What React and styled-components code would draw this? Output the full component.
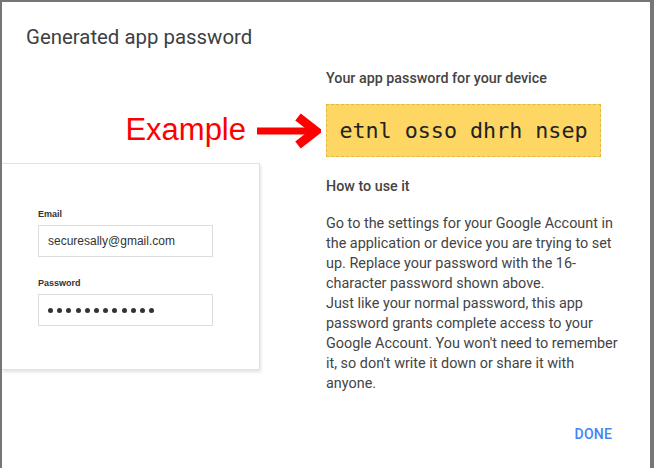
import React from "react";
import styled, { createGlobalStyle } from "styled-components";

const Global = createGlobalStyle`
  html, body { margin: 0; padding: 0; }
  body {
    background: #767676;
    font-family: Roboto, "Noto Sans", Arial, sans-serif;
    overflow: hidden;
  }
`;

const Backdrop = styled.div`
  width: 654px;
  height: 468px;
  padding: 2px 4px 0 2px;
  box-sizing: border-box;
`;

const Dialog = styled.div`
  background: #fff;
  height: 466px;
  display: flex;
  flex-direction: column;
  overflow: hidden;
`;

const Title = styled.h1`
  margin: 0;
  padding: 23px 0 0 24px;
  font-size: 20.4px;
  line-height: 24px;
  font-weight: 400;
  color: #3c4043;
`;

const Body = styled.div`
  display: flex;
  margin-top: 21px;
`;

const LeftCol = styled.div`
  width: 324px;
  flex: none;
  display: flex;
  flex-direction: column;
  padding-top: 34px;
`;

const ExampleRow = styled.div`
  height: 53px;
  display: flex;
  align-items: center;
  justify-content: flex-end;
  gap: 11px;
  padding-right: 5px;
`;

const ExampleText = styled.span`
  font-family: "Liberation Sans", Arial, sans-serif;
  font-size: 31px;
  color: #ff0000;
  line-height: 1;
  margin-top: -2px;
`;

const Card = styled.div`
  margin-top: 6px;
  width: 258px;
  height: 207px;
  box-sizing: border-box;
  background: #fff;
  border: 1px solid #e2e2e2;
  border-left: none;
  box-shadow: 1px 2px 3px rgba(0, 0, 0, 0.12);
  padding: 44px 0 0 36px;
  font-family: "Liberation Sans", Arial, sans-serif;
`;

const Label = styled.div`
  font-size: 9px;
  line-height: 12px;
  font-weight: 700;
  color: #333;
  margin-top: ${(p) => p.$top || 0}px;
`;

const Input = styled.div`
  margin-top: 5px;
  width: 175px;
  height: 32px;
  box-sizing: border-box;
  border: 1px solid #dcdcdc;
  display: flex;
  align-items: center;
  padding-left: 9px;
  font-size: 12px;
  color: #333;
  gap: 4.2px;
`;

const Dot = styled.span`
  width: 5px;
  height: 5px;
  border-radius: 50%;
  background: #333;
  flex: none;
`;

const RightCol = styled.div`
  width: 298px;
  color: #444;
`;

const Heading = styled.div`
  font-size: 14.3px;
  line-height: 16px;
  font-weight: 500;
  color: #444;
  margin-top: ${(p) => p.$top || 0}px;
`;

const PassBox = styled.div`
  margin-top: 18px;
  width: 275px;
  height: 53px;
  box-sizing: border-box;
  background: #fdd663;
  border: 1px dashed #e3b742;
  display: flex;
  align-items: center;
  justify-content: center;
  font-family: "DejaVu Sans Mono", "Liberation Mono", monospace;
  font-size: 21.7px;
  color: #222;
  white-space: pre;
`;

const Paragraph = styled.p`
  margin: 20px 0 0;
  font-size: 14.4px;
  line-height: 20px;
  color: #444;
`;

const Footer = styled.div`
  margin-top: auto;
  display: flex;
  justify-content: flex-end;
  padding: 0 38px 26px 0;
`;

const DoneButton = styled.button`
  border: none;
  background: none;
  padding: 0;
  font-family: Roboto, Arial, sans-serif;
  font-size: 14px;
  line-height: 16px;
  font-weight: 500;
  color: #4285f4;
  letter-spacing: 0.2px;
  cursor: pointer;
`;

const Arrow = () => (
  <svg width="64" height="36" viewBox="0 0 64 36">
    <rect x="0" y="14.5" width="52" height="7" fill="#ff0000" />
    <polyline
      points="41,4 59,18 41,32"
      fill="none"
      stroke="#ff0000"
      strokeWidth="9"
      strokeLinejoin="miter"
      strokeMiterlimit="4"
    />
  </svg>
);

export default function App() {
  return (
    <>
      <Global />
      <Backdrop>
        <Dialog>
          <Title>Generated app password</Title>
          <Body>
            <LeftCol>
              <ExampleRow>
                <ExampleText>Example</ExampleText>
                <Arrow />
              </ExampleRow>
              <Card>
                <Label>Email</Label>
                <Input>securesally@gmail.com</Input>
                <Label $top={20}>Password</Label>
                <Input>
                  {Array.from({ length: 12 }).map((_, i) => (
                    <Dot key={i} />
                  ))}
                </Input>
              </Card>
            </LeftCol>
            <RightCol>
              <Heading>Your app password for your device</Heading>
              <PassBox>etnl osso dhrh nsep</PassBox>
              <Heading $top={21}>How to use it</Heading>
              <Paragraph>
                Go to the settings for your Google Account in the application or device you are
                trying to set up. Replace your password with the 16-character password shown
                above.
                <br />
                Just like your normal password, this app password grants complete access to your
                Google Account. You won't need to remember it, so don't write it down or share it
                with anyone.
              </Paragraph>
            </RightCol>
          </Body>
          <Footer>
            <DoneButton>DONE</DoneButton>
          </Footer>
        </Dialog>
      </Backdrop>
    </>
  );
}
